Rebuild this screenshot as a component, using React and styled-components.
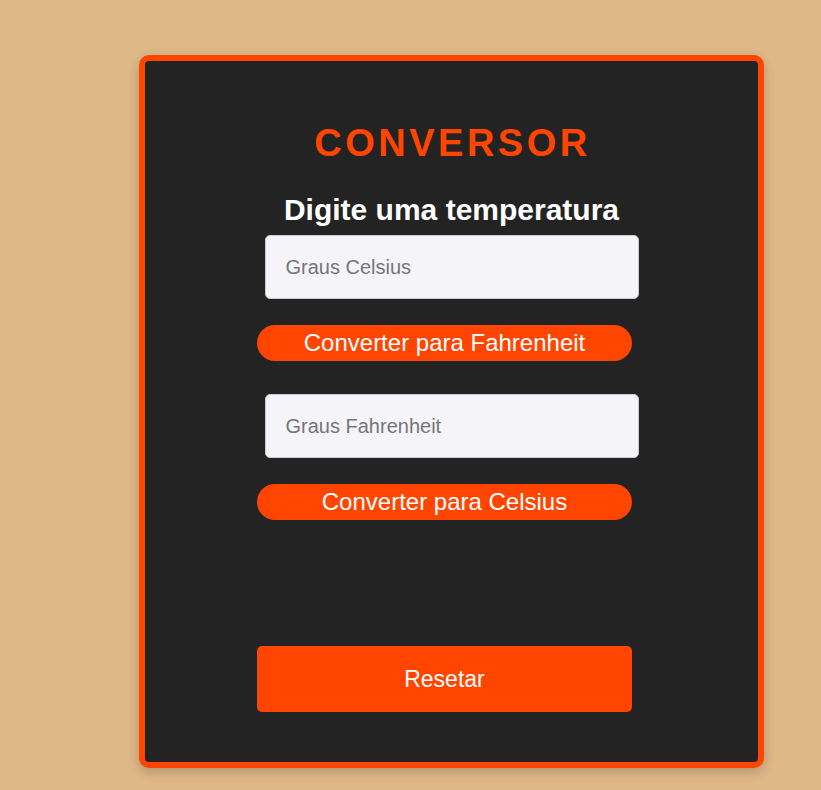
import React from "react";
import styled, { createGlobalStyle } from "styled-components";

const GlobalStyle = createGlobalStyle`
  html, body {
    margin: 0;
    padding: 0;
    background: #deb887;
    font-family: "Liberation Sans", Arial, sans-serif;
  }
  #root {
    min-height: 100vh;
  }
`;

const Page = styled.div`
  padding: 55px 0 0 139px;
`;

const Card = styled.div`
  box-sizing: border-box;
  width: 625px;
  height: 713px;
  border: 6px solid #ff4500;
  border-radius: 10px;
  background: #232323;
  box-shadow: 0 4px 12px rgba(0, 0, 0, 0.2);
  display: flex;
  flex-direction: column;
  align-items: center;
  padding-top: 61px;
`;

const Title = styled.h1`
  margin: 0;
  font-size: 38px;
  font-weight: bold;
  line-height: normal;
  letter-spacing: 3.5px;
  color: #ff4500;
  padding-left: 2px;
`;

const Subtitle = styled.h2`
  margin: 28px 0 0;
  font-size: 30px;
  font-weight: bold;
  line-height: normal;
  color: #ffffff;
`;

const Field = styled.input`
  box-sizing: border-box;
  width: 374px;
  height: 64px;
  margin-top: ${(p) => p.$top}px;
  padding: 0 20px;
  border: 1px solid #cacad0;
  border-radius: 5px;
  background: #f4f4f9;
  font-family: "Liberation Sans", Arial, sans-serif;
  font-size: 20px;
  color: #333;
  outline: none;
  &::placeholder {
    color: #767676;
  }
`;

const PillButton = styled.button`
  box-sizing: border-box;
  width: 375px;
  height: 36px;
  margin-top: 26px;
  margin-right: 14px;
  border: none;
  border-radius: 18px;
  background: #ff4500;
  color: #ffffff;
  font-family: "Liberation Sans", Arial, sans-serif;
  font-size: 24px;
  line-height: 36px;
  padding: 0;
  cursor: pointer;
`;

const ResetButton = styled.button`
  box-sizing: border-box;
  width: 375px;
  height: 66px;
  margin-top: 126px;
  margin-right: 14px;
  border: none;
  border-radius: 5px;
  background: #ff4500;
  color: #ffffff;
  font-family: "Liberation Sans", Arial, sans-serif;
  font-size: 23px;
  padding: 0;
  cursor: pointer;
`;

export default function App() {
  return (
    <>
      <GlobalStyle />
      <Page>
        <Card>
          <Title>CONVERSOR</Title>
          <Subtitle>Digite uma temperatura</Subtitle>
          <Field $top={8} type="text" placeholder="Graus Celsius" />
          <PillButton>Converter para Fahrenheit</PillButton>
          <Field $top={33} type="text" placeholder="Graus Fahrenheit" />
          <PillButton>Converter para Celsius</PillButton>
          <ResetButton>Resetar</ResetButton>
        </Card>
      </Page>
    </>
  );
}
